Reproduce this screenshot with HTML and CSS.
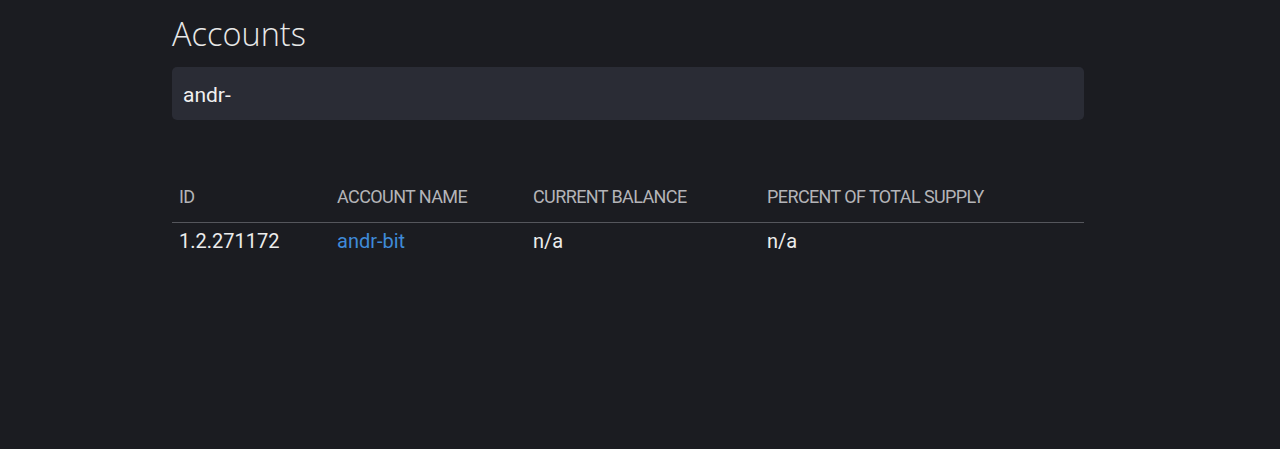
FILE: index.html
```html
<!DOCTYPE html>
<html lang="en">
<head>
    <meta charset="UTF-8">
    <title>Accounts</title>
    <link rel="stylesheet" href="styles.css">
</head>
<body>
    <div class="page">
        <h1>Accounts</h1>
        <input type="text" class="search" value="andr-">
        <table class="accounts">
            <thead>
                <tr>
                    <th class="col-id">ID</th>
                    <th class="col-name">Account name</th>
                    <th class="col-balance">Current balance</th>
                    <th>Percent of total supply</th>
                </tr>
            </thead>
            <tbody>
                <tr>
                    <td>1.2.271172</td>
                    <td><a href="#">andr-bit</a></td>
                    <td>n/a</td>
                    <td>n/a</td>
                </tr>
            </tbody>
        </table>
    </div>
</body>
</html>
```

FILE: styles.css
```css
body {
    margin: 0;
    background: #1b1c21;
    color: #e6e6e6;
    font-family: Roboto, "Liberation Sans", sans-serif;
}
.page {
    width: 912px;
    margin-left: 172px;
}
h1 {
    margin: 0;
    padding-top: 12px;
    font-family: "Open Sans", sans-serif;
    font-weight: 300;
    font-size: 32.5px;
    line-height: 44px;
    color: #e8e8e8;
}
.search {
    display: block;
    box-sizing: border-box;
    width: 100%;
    height: 53px;
    margin-top: 11px;
    padding: 3px 11px 0;
    background: #2a2c35;
    border: none;
    border-radius: 5px;
    color: #f0f0f0;
    font-family: Roboto, sans-serif;
    font-size: 21px;
    outline: none;
}
.accounts {
    width: 100%;
    margin-top: 58px;
    border-collapse: collapse;
}
th {
    text-align: left;
    font-weight: 400;
    font-size: 18px;
    letter-spacing: -0.6px;
    text-transform: uppercase;
    color: #b4b4b8;
    padding: 8px 7px 15px;
    border-bottom: 1px solid #55565c;
}
td {
    padding: 6px 7px;
    font-size: 20px;
    color: #ececec;
}
.col-id { width: 144px; }
.col-name { width: 182px; }
.col-balance { width: 220px; }
a {
    color: #3f8ad8;
    text-decoration: none;
}
```
